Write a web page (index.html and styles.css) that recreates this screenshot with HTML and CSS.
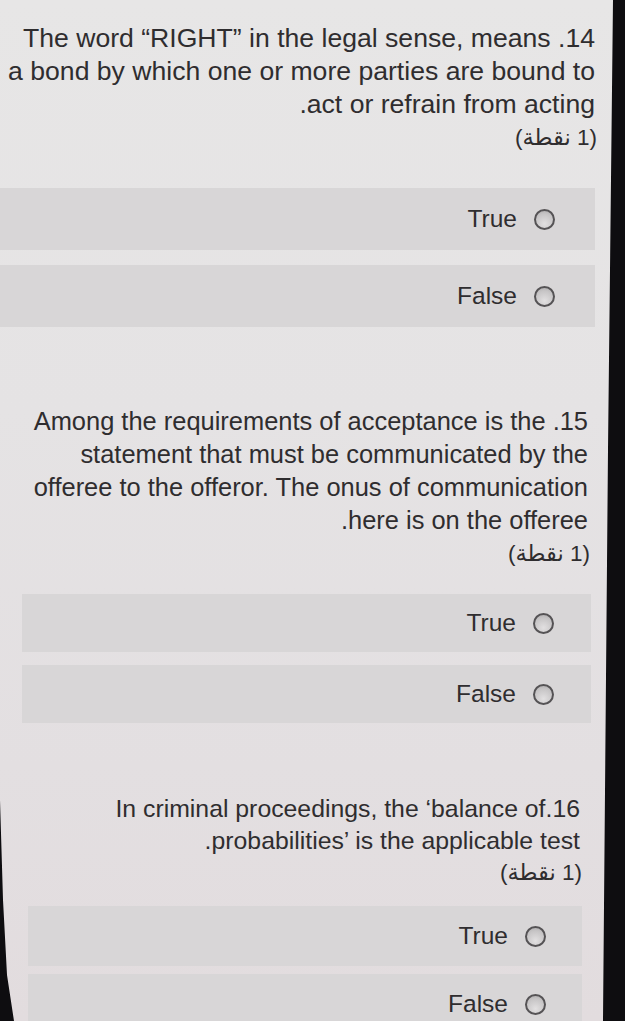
FILE: index.html
```html
<!DOCTYPE html>
<html lang="ar" dir="rtl">
<head>
<meta charset="utf-8">
<title>Quiz</title>
<link rel="stylesheet" href="styles.css">
</head>
<body>
<div class="screen">
  <section class="question q14">
    <div class="title">14. The word “RIGHT” in the legal sense, means<br>a bond by which one or more parties are bound to<br>act or refrain from acting.</div>
    <div class="points">(1 نقطة)</div>
    <div class="options">
      <div class="option"><span class="radio"></span><span class="opt-label">True</span></div>
      <div class="option"><span class="radio"></span><span class="opt-label">False</span></div>
    </div>
  </section>
  <section class="question q15">
    <div class="title">15. Among the requirements of acceptance is the<br>statement that must be communicated by the<br>offeree to the offeror. The onus of communication<br>here is on the offeree.</div>
    <div class="points">(1 نقطة)</div>
    <div class="options">
      <div class="option"><span class="radio"></span><span class="opt-label">True</span></div>
      <div class="option"><span class="radio"></span><span class="opt-label">False</span></div>
    </div>
  </section>
  <section class="question q16">
    <div class="title">16.In criminal proceedings, the ‘balance of<br>probabilities’ is the applicable test.</div>
    <div class="points">(1 نقطة)</div>
    <div class="options">
      <div class="option"><span class="radio"></span><span class="opt-label">True</span></div>
      <div class="option"><span class="radio"></span><span class="opt-label">False</span></div>
    </div>
  </section>
</div>
</body>
</html>
```

FILE: styles.css
```css
html, body {
  margin: 0;
  padding: 0;
}
body {
  background: #0e0d10;
  width: 625px;
  height: 1021px;
  overflow: hidden;
  font-family: "Liberation Sans", Arial, "DejaVu Sans", sans-serif;
  color: #2f2d2f;
}
.screen {
  height: 1021px;
  overflow: hidden;
  background: linear-gradient(180deg, #e7e6e6 0%, #e5e3e4 40%, #e3dfe1 75%, #e2dcde 100%);
  clip-path: polygon(0 0, 613px 0, 608px 450px, 603px 100%, 14px 100%, 7px 975px, 3px 900px, 0 800px);
  display: flex;
  flex-direction: column;
}
.question {
  display: flex;
  flex-direction: column;
  flex: none;
}
.title, .points {
  line-height: 33px;
  text-align: right;
  white-space: nowrap;
}
.title {
  font-size: 26.6px;
}
.points {
  font-size: 22.5px;
  margin-right: -2px;
}
.options {
  display: flex;
  flex-direction: column;
}
.option {
  display: flex;
  align-items: center;
  gap: 17px;
  background: #d8d6d7;
  font-size: 24.5px;
}
.radio {
  width: 17px;
  height: 17px;
  border: 2px solid #555355;
  border-radius: 50%;
  background: radial-gradient(circle at 50% 75%, #e2e0e1 0%, #c6c4c5 65%, #a9a7a8 100%);
  flex: none;
}

.q14 {
  padding-top: 22px;
  margin-right: 30px;
}
.q14 .options {
  margin-top: 34px;
  gap: 15px;
}
.q14 .option {
  height: 62px;
  padding-right: 40px;
}

.q15 {
  margin: 78px 37px 0 22px;
}
.q15 .title {
  font-size: 25.45px;
}
.q15 .options {
  margin-top: 24px;
  gap: 13px;
}
.q15 .option {
  height: 58px;
  padding-right: 37px;
  margin-right: -3px;
}

.q16 {
  margin: 70px 45px 0 28px;
}
.q16 .title, .q16 .points {
  line-height: 32px;
}
.q16 .title {
  font-size: 24.8px;
}
.q16 .options {
  margin-top: 17px;
  gap: 8px;
}
.q16 .option {
  height: 60px;
  padding-right: 36px;
  margin-right: -2px;
}
```
